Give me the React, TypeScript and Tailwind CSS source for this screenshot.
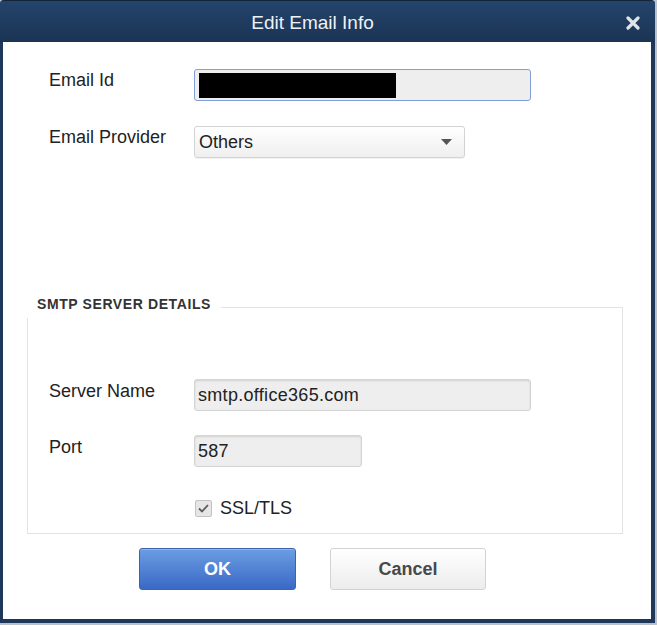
import React from "react";

const font = { fontFamily: '"Liberation Sans", Arial, sans-serif' };

export default function App() {
  return (
    <div className="w-[657px] h-[625px] bg-[#b9c2cc]" style={font}>
      <div className="w-[655px] h-[623px] bg-[#1d385a] rounded-t-[4px] flex flex-col border-t border-[#12243a]">
        {/* Title bar */}
        <div className="h-[41px] flex items-center bg-gradient-to-b from-[#24446b] to-[#1b3454] rounded-t-[4px]">
          <div className="flex-1 flex justify-center pl-[18px] pt-[2px]">
            <span className="text-[19px] text-[#eef2f7] leading-none">Edit Email Info</span>
          </div>
          <div className="w-[48px] flex justify-center pl-[4px] pt-[2px]">
            <svg width="14" height="14" viewBox="0 0 14 14">
              <path d="M2 2 L12 12 M12 2 L2 12" stroke="#dfe4ea" strokeWidth="3.2" strokeLinecap="round" />
            </svg>
          </div>
        </div>

        {/* Body */}
        <div className="flex-1 ml-[3px] mr-[4px] mb-[4px] bg-white text-[#222] text-[18px]">
          <div className="pt-[27px] pl-[46px]">
            <div className="flex items-start">
              <div className="w-[145px] leading-[22px]">Email Id</div>
              <div className="w-[337px] h-[32px] bg-[#eeeeee] border border-[#7f9fd6] rounded-[3px] flex items-center pl-[4px]">
                <div className="w-[197px] h-[25px] bg-black" />
              </div>
            </div>
            <div className="flex items-start mt-[25px]">
              <div className="w-[145px] leading-[22px]">Email Provider</div>
              <div className="w-[271px] h-[32px] bg-gradient-to-b from-white to-[#efefef] border border-[#d3d3d3] rounded-[3px] flex items-center pl-[4px] pr-[12px] shadow-[0_1px_1px_rgba(0,0,0,0.06)]">
                <span className="flex-1 leading-none">Others</span>
                <svg width="11" height="6" viewBox="0 0 11 6">
                  <path d="M0 0 H11 L5.5 6 Z" fill="#555" />
                </svg>
              </div>
            </div>
          </div>

          <fieldset className="ml-[24px] mr-[28px] mt-[139px] border border-[#e3e3e3] h-[237px] pl-[21px]">
            <legend className="ml-[-22px] px-[10px] pb-[7px] text-[14px] font-bold text-[#333] leading-[14px] tracking-[0.6px]">
              SMTP SERVER DETAILS
            </legend>
            <div className="pt-[61px]">
              <div className="flex items-start">
                <div className="w-[145px] leading-[22px] pt-[1px]">Server Name</div>
                <div className="w-[337px] h-[32px] bg-[#eeeeee] border border-[#d4d4d4] rounded-[3px] flex items-center pl-[3px] shadow-[inset_0_1px_2px_rgba(0,0,0,0.12)]">
                  <span className="leading-none tracking-[0.3px]">smtp.office365.com</span>
                </div>
              </div>
              <div className="flex items-start mt-[24px]">
                <div className="w-[145px] leading-[22px] pt-[1px]">Port</div>
                <div className="w-[168px] h-[32px] bg-[#eeeeee] border border-[#d4d4d4] rounded-[3px] flex items-center pl-[3px] shadow-[inset_0_1px_2px_rgba(0,0,0,0.12)]">
                  <span className="leading-none tracking-[0.3px]">587</span>
                </div>
              </div>
              <div className="flex items-center mt-[32px] pl-[146px]">
                <div className="w-[17px] h-[17px] bg-[#e6e6e6] border border-[#c2c2c2] rounded-[2px] flex items-center justify-center">
                  <svg width="11" height="9" viewBox="0 0 11 9">
                    <path d="M1 4.5 L4 7.5 L10 1" stroke="#5a5a5a" strokeWidth="1.8" fill="none" />
                  </svg>
                </div>
                <span className="ml-[8px] leading-none">SSL/TLS</span>
              </div>
            </div>
          </fieldset>

          <div className="flex mt-[14px] pl-[136px] gap-[34px]">
            <button className="w-[157px] h-[42px] rounded-[3px] border border-[#3b64ae] bg-gradient-to-b from-[#6c9de2] to-[#3a69c6] text-white font-bold text-[18px] shadow-[inset_0_1px_0_rgba(255,255,255,0.25)]">
              OK
            </button>
            <button className="w-[156px] h-[42px] rounded-[3px] border border-[#d2d2d2] bg-gradient-to-b from-white to-[#ececec] text-[#484848] font-bold text-[18px]">
              Cancel
            </button>
          </div>
        </div>
      </div>
    </div>
  );
}
